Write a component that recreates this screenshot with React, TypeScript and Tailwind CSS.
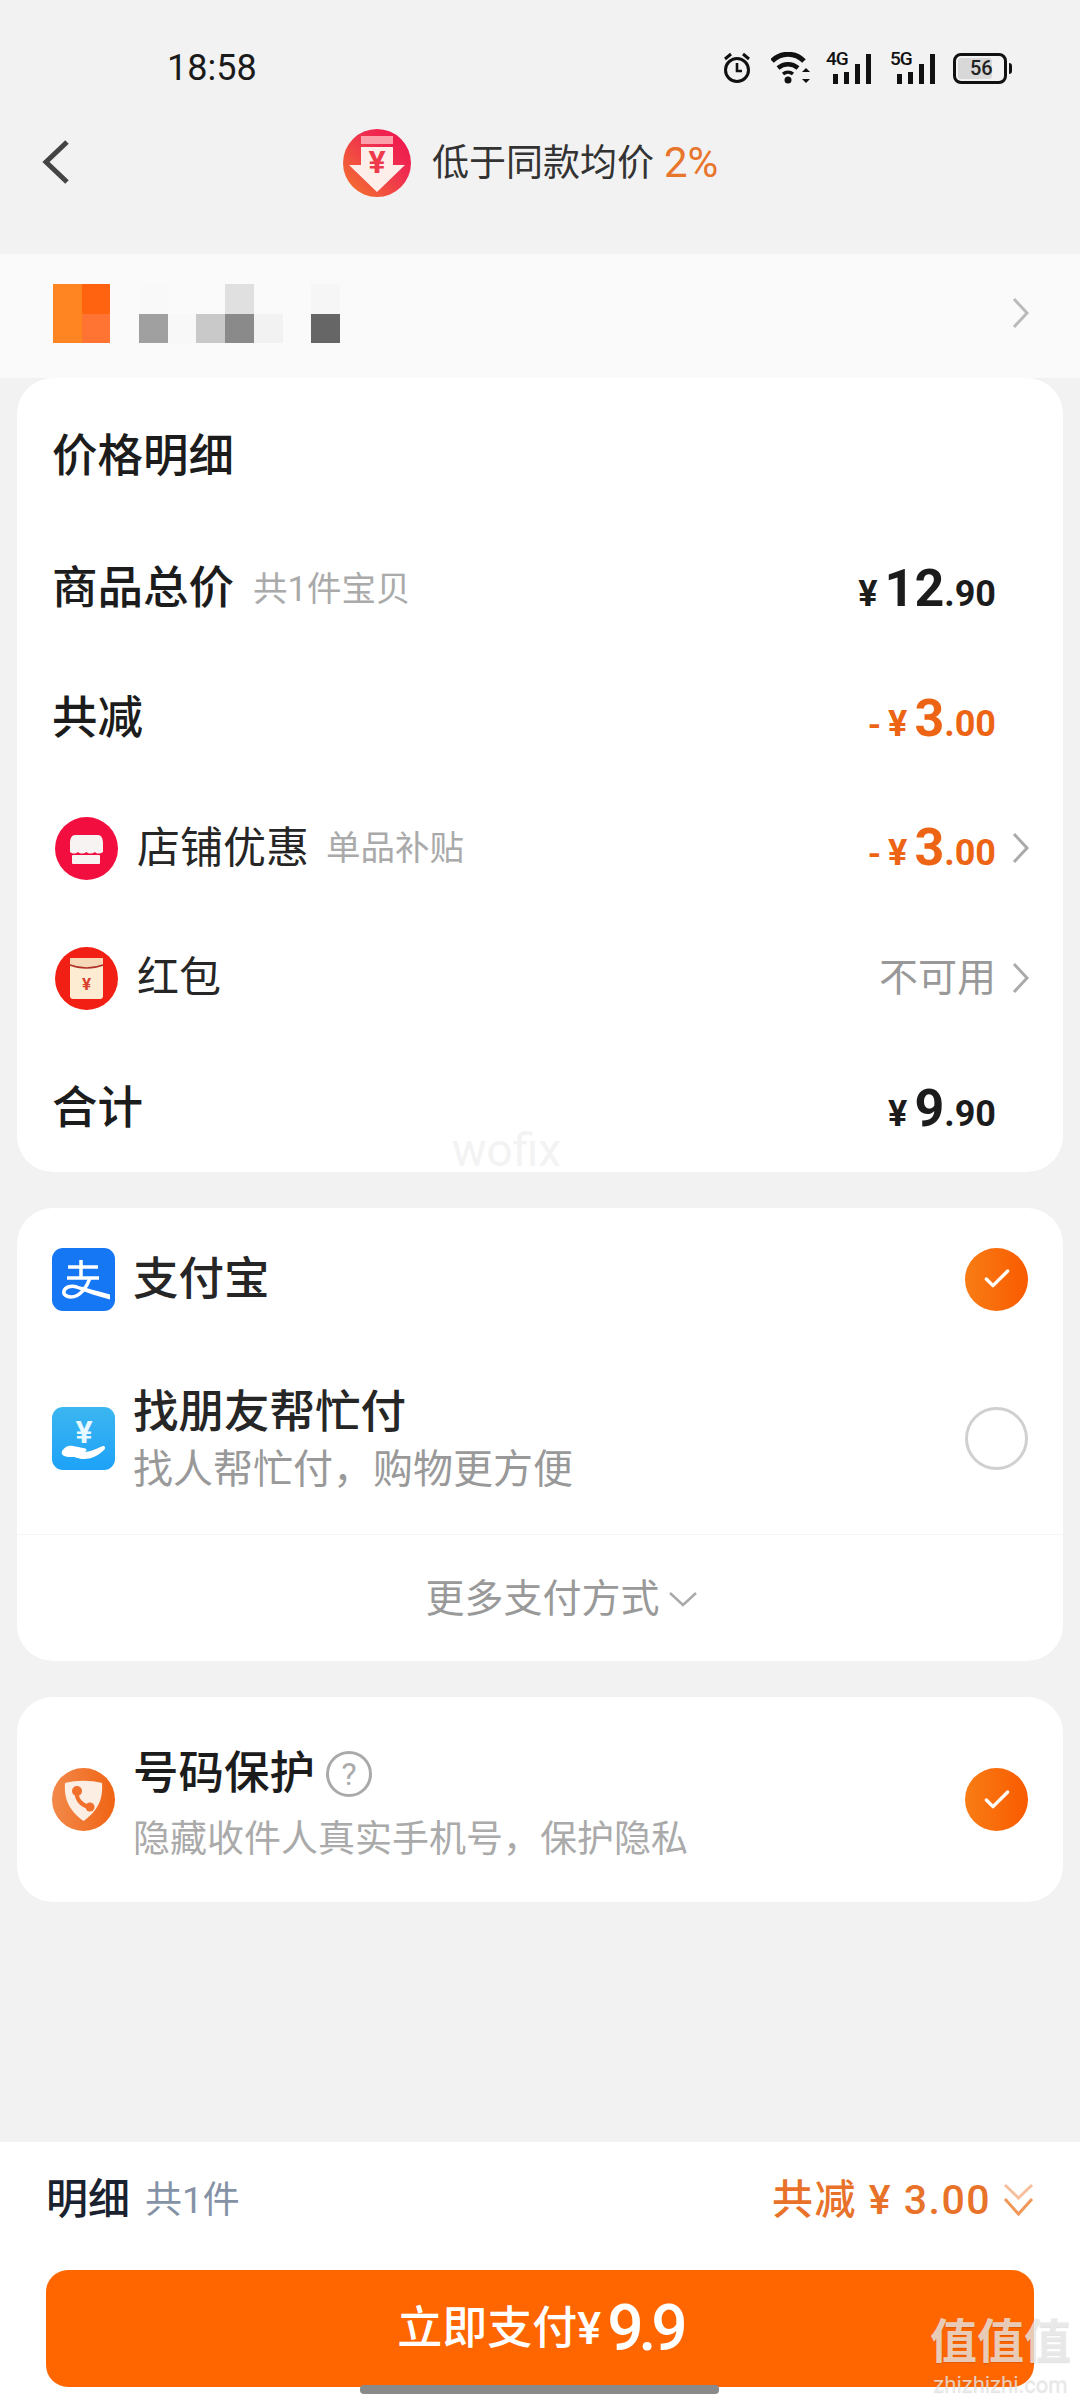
import { Check } from 'lucide-react';

const mosaicCells = [
  'bg-[#ff8522]', 'bg-[#ff630f]', '', 'bg-[#f9f9f9]', '', '', 'bg-[#e0e0e0]', '', '', 'bg-[#f6f6f6]',
  'bg-[#ff8522]', 'bg-[#ff7433]', '', 'bg-[#a0a0a0]', 'bg-[#f8f8f8]', 'bg-[#c9c9c9]', 'bg-[#8a8a8a]', 'bg-[#f2f2f2]', '', 'bg-[#666666]',
];

function Chevron({ className }: { className?: string }) {
  return (
    <svg width="18" height="32" viewBox="0 0 18 32" className={className}>
      <path d="M2 2l13 14L2 30" fill="none" stroke="currentColor" strokeWidth="3" />
    </svg>
  );
}

function StatusIcons() {
  return (
    <div className="flex items-center">
      <svg width="28" height="34" viewBox="0 0 28 34" className="mr-[20px]">
        <circle cx="14" cy="19" r="11.500" fill="none" stroke="#111" strokeWidth="3" />
        <path d="M14 12v8h5" fill="none" stroke="#111" strokeWidth="2.600" />
        <path d="M2 8l6-5M26 8l-6-5" stroke="#111" strokeWidth="3" />
      </svg>
      <svg width="39" height="32" viewBox="0 0 39 32" className="mr-[16px]">
        <path d="M1 9C10 0 24 0 33 9" fill="none" stroke="#111" strokeWidth="5" />
        <path d="M7 16c6-5 14-5 20 0" fill="none" stroke="#111" strokeWidth="4.500" />
        <path d="M12 22c3-2.500 7-2.500 10 0" fill="none" stroke="#111" strokeWidth="3.500" />
        <circle cx="17" cy="28" r="3.500" fill="#111" />
        <path d="M35 16l4 4h-8zM35 31l4-4h-8z" fill="#111" />
      </svg>
      <SignalBars label="4G" />
      <div className="w-[19px]" />
      <SignalBars label="5G" />
      <div className="w-[18px]" />
      <div className="flex h-[31px] w-[54px] items-center rounded-[8px] border-[3px] border-[#111] p-[2px]">
        <div className="flex h-full w-[34px] items-center rounded-[3px] bg-[#d8d8d8] pl-[12px] text-[20px] leading-none font-medium text-[#222]">
          56
        </div>
      </div>
      <div className="ml-[2px] h-[11px] w-[3px] rounded-r-sm bg-[#111]" />
    </div>
  );
}

function SignalBars({ label }: { label: string }) {
  return (
    <div className="relative flex h-[32px] w-[45px] items-end justify-end gap-[6px]">
      <span className="absolute top-[-3px] left-0 text-[19px] leading-none font-medium tracking-[-1px] text-[#111]">{label}</span>
      <div className="h-[10px] w-[5px] bg-[#111]" />
      <div className="h-[12px] w-[5px] bg-[#111]" />
      <div className="h-[20px] w-[5px] bg-[#111]" />
      <div className="h-[30px] w-[5px] bg-[#111]" />
    </div>
  );
}

function PriceDropIcon() {
  return (
    <svg width="68" height="68" viewBox="0 0 68 68">
      <defs>
        <linearGradient id="drop" x1="0" y1="1" x2="1" y2="0">
          <stop offset="0" stopColor="#f47a2a" />
          <stop offset="0.6" stopColor="#ef2f4f" />
          <stop offset="1" stopColor="#f0104f" />
        </linearGradient>
      </defs>
      <circle cx="34" cy="34" r="34" fill="url(#drop)" />
      <rect x="18" y="7" width="32" height="8" fill="#fba0ab" />
      <path d="M18 18h32v18h12L34 63 6 36h12z" fill="#fdeeea" />
      <text x="34" y="44" textAnchor="middle" fontSize="32" fontWeight="700" fill="#ee3a4a">¥</text>
    </svg>
  );
}

function ShopIcon() {
  return (
    <svg width="63" height="63" viewBox="0 0 63 63">
      <circle cx="31.500" cy="31.500" r="31.500" fill="#f20f3f" />
      <path d="M20 18h23c3 0 5 3 5 8v9c-3 2-6 2-8 0-3 2-6 2-8.500 0-3 2-6 2-8.500 0-3 2-5 2-8 0v-9c0-5 2-8 5-8z" fill="#f7f3f3" />
      <rect x="17" y="38" width="28" height="9" rx="1" fill="#f7f3f3" />
    </svg>
  );
}

function RedPacketIcon() {
  return (
    <svg width="63" height="63" viewBox="0 0 63 63">
      <circle cx="31.500" cy="31.500" r="31.500" fill="#f21f14" />
      <rect x="15" y="11" width="33" height="41" rx="3" fill="#fdebd2" />
      <path d="M15 11h33v7c-10 4-23 4-33 0z" fill="#f6d8b8" />
      <path d="M15 18c10 4 23 4 33 0" fill="none" stroke="#b03028" strokeWidth="1.500" />
      <text x="31.500" y="43" textAnchor="middle" fontSize="17" fontWeight="700" fill="#d8402c">¥</text>
    </svg>
  );
}

function AlipayIcon() {
  return (
    <svg width="63" height="63" viewBox="0 0 63 63">
      <rect width="63" height="63" rx="11" fill="#1677f5" />
      <path d="M16 19h30M29 12v17M15 30h32" stroke="#fff" strokeWidth="3.500" fill="none" />
      <path d="M38 30c-3 9-10 19-19 19-5 0-8-3-7-6 1-4 7-6 13-4" stroke="#fff" strokeWidth="3.500" fill="none" />
      <path d="M24 37.500c10 2 22 6 34 9v5c-12-3-23-7-34-11z" fill="#fff" />
    </svg>
  );
}

function FriendPayIcon() {
  return (
    <svg width="63" height="63" viewBox="0 0 63 63">
      <defs>
        <linearGradient id="friend" x1="0" y1="0" x2="0" y2="1">
          <stop offset="0" stopColor="#3cb6f0" />
          <stop offset="1" stopColor="#1da2f8" />
        </linearGradient>
      </defs>
      <rect width="63" height="63" rx="11" fill="url(#friend)" />
      <text x="32" y="36" textAnchor="middle" fontSize="32" fontWeight="700" fill="#e8f8ff">¥</text>
      <path d="M10 44c3-5 7-6 11-5l10 2c4 0 5 3 1 4 5 0 12-3 19-6 2 0 3 2 1 4-6 6-13 9-20 9-6 0-8-2-11-2-5 0-13 0-11-6z" fill="#fff" />
    </svg>
  );
}

function PhoneGuardIcon() {
  return (
    <svg width="63" height="63" viewBox="0 0 63 63">
      <defs>
        <linearGradient id="guard" x1="0" y1="0" x2="1" y2="0">
          <stop offset="0" stopColor="#f2894a" />
          <stop offset="1" stopColor="#f06414" />
        </linearGradient>
      </defs>
      <circle cx="31.500" cy="31.500" r="31.500" fill="url(#guard)" />
      <path d="M13 15c12-3 25-3 37 0 1 15-3 27-18.500 38C16 42 12 30 13 15z" fill="#fdeee4" />
      <path d="M25 24c-1 7 4 13 12 15" fill="none" stroke="#f0702c" strokeWidth="4" />
      <circle cx="25" cy="23" r="5" fill="#f0702c" />
      <circle cx="38" cy="39" r="4.500" fill="#f0702c" />
    </svg>
  );
}

function CheckDot() {
  return (
    <div className="flex h-[63px] w-[63px] items-center justify-center rounded-full bg-gradient-to-r from-[#f87c14] to-[#f95a00]">
      <Check className="h-[32px] w-[32px] text-white" strokeWidth={2.5} />
    </div>
  );
}

function Price({ big, tail, minus }: { big: string; tail: string; minus?: boolean }) {
  return (
    <span className={`flex items-baseline font-['Roboto',sans-serif] font-bold ${minus ? 'text-[#ec6414]' : 'text-[#1c1c1c]'}`}>
      {minus && <span className="mr-[7px] text-[34px] leading-none">-</span>}
      <span className="mr-[7px] text-[36px] leading-none">¥</span>
      <span className="text-[52px] leading-none">{big}</span>
      <span className="text-[36px] leading-none">{tail}</span>
    </span>
  );
}

export default function App() {
  return (
    <div className="relative flex h-[2400px] w-[1080px] flex-col overflow-hidden bg-[#f2f2f2] font-['Roboto','Noto_Sans_CJK_SC',sans-serif]">
      <div className="flex h-[106px] items-center justify-between pt-[30px] pr-[68px] pl-[167px]">
        <span className="text-[36px] leading-none text-[#1a1a1a]">18:58</span>
        <StatusIcons />
      </div>

      <div className="relative mb-[34px] flex h-[114px] items-center justify-start pl-[343px]">
        <svg width="30" height="46" viewBox="0 0 30 46" className="absolute top-[33px] left-[41px] text-[#444]">
          <path d="M26 3L5 23l21 20" fill="none" stroke="currentColor" strokeWidth="5" />
        </svg>
        <PriceDropIcon />
        <span className="ml-[21px] text-[37px] leading-none text-[#333]">低于同款均价</span>
        <span className="ml-[10px] text-[42px] leading-none text-[#e8752c]">2%</span>
      </div>

      <div className="flex h-[124px] items-center justify-between bg-[#fafafa] pr-[50px] pb-[6px] pl-[53px]">
        <div className="grid grid-cols-[repeat(10,28.7px)] grid-rows-[30px_29px]">
          {mosaicCells.map((cell, index) => (
            <div key={index} className={cell} />
          ))}
        </div>
        <Chevron className="text-[#bbb]" />
      </div>

      <section className="mx-[17px] rounded-[36px] bg-white pt-[14px] text-[#1c1c1c]">
        <div className="flex h-[130px] items-center pl-[35px] text-[45.5px] leading-none font-medium">价格明细</div>
        <div className="flex h-[130px] items-center justify-between pt-[4px] pr-[67px] pl-[35px]">
          <div className="flex items-center">
            <span className="text-[45.5px] leading-none font-medium">商品总价</span>
            <span className="ml-[19px] text-[34.5px] leading-none text-[#aaa]">共1件宝贝</span>
          </div>
          <Price big="12" tail=".90" />
        </div>
        <div className="flex h-[130px] items-center justify-between pt-[4px] pr-[67px] pl-[35px]">
          <span className="text-[45.5px] leading-none font-medium">共减</span>
          <Price big="3" tail=".00" minus />
        </div>
        <div className="flex h-[130px] items-center justify-between pt-[2px] pr-[33px] pl-[38px]">
          <div className="flex items-center">
            <ShopIcon />
            <span className="ml-[19px] text-[43px] leading-none text-[#262626]">店铺优惠</span>
            <span className="ml-[17px] text-[34.5px] leading-none text-[#aaa]">单品补贴</span>
          </div>
          <div className="flex items-center">
            <Price big="3" tail=".00" minus />
            <Chevron className="ml-[16px] text-[#aaa]" />
          </div>
        </div>
        <div className="flex h-[130px] items-center justify-between pt-[2px] pr-[33px] pl-[38px]">
          <div className="flex items-center">
            <RedPacketIcon />
            <span className="ml-[19px] text-[42px] leading-none text-[#262626]">红包</span>
          </div>
          <div className="flex items-center">
            <span className="text-[39px] leading-none text-[#999]">不可用</span>
            <Chevron className="ml-[16px] text-[#aaa]" />
          </div>
        </div>
        <div className="flex h-[130px] items-center justify-between pt-[4px] pr-[67px] pl-[35px]">
          <span className="text-[45.5px] leading-none font-medium">合计</span>
          <Price big="9" tail=".90" />
        </div>
      </section>

      <section className="mx-[17px] mt-[36px] rounded-[36px] bg-white">
        <div className="flex h-[142px] items-center justify-between px-[35px]">
          <div className="flex items-center">
            <AlipayIcon />
            <span className="ml-[18px] pt-[2px] text-[45.5px] leading-none font-medium text-[#262626]">支付宝</span>
          </div>
          <CheckDot />
        </div>
        <div className="flex h-[185px] items-center justify-between border-b border-[#f6f6f6] px-[35px] pb-[8px]">
          <div className="flex items-center">
            <FriendPayIcon />
            <div className="ml-[18px] flex flex-col gap-[15px] pt-[4px]">
              <span className="text-[45.5px] leading-none font-medium text-[#262626]">找朋友帮忙付</span>
              <span className="text-[40px] leading-none text-[#999]">找人帮忙付，购物更方便</span>
            </div>
          </div>
          <div className="h-[63px] w-[63px] rounded-full border-[3px] border-[#d0d0d0]" />
        </div>
        <div className="flex h-[126px] items-center justify-center pt-[2px] pl-[43px] text-[#999]">
          <span className="text-[39px] leading-none">更多支付方式</span>
          <svg width="30" height="16" viewBox="0 0 30 16" className="ml-[8px] text-[#aaa]">
            <path d="M2 2l13 12L28 2" fill="none" stroke="currentColor" strokeWidth="2.500" />
          </svg>
        </div>
      </section>

      <section className="mx-[17px] mt-[36px] flex h-[205px] items-center justify-between rounded-[36px] bg-white px-[35px]">
        <div className="flex items-center">
          <PhoneGuardIcon />
          <div className="ml-[18px] flex flex-col gap-[24px] pt-[9px]">
            <div className="flex items-center">
              <span className="text-[45.5px] leading-none font-medium text-[#1c1c1c]">号码保护</span>
              <div className="ml-[11px] flex h-[46px] w-[46px] items-center justify-center rounded-full border-[3px] border-[#aaa] text-[32px] leading-none text-[#aaa]">
                ?
              </div>
            </div>
            <span className="text-[37px] leading-none text-[#aaa]">隐藏收件人真实手机号，保护隐私</span>
          </div>
        </div>
        <CheckDot />
      </section>

      <div className="flex-1" />

      <div className="flex h-[258px] flex-col bg-white px-[46px]">
        <div className="flex h-[116px] items-center justify-between">
          <div className="flex items-center">
            <span className="text-[42px] leading-none font-medium text-[#1a2230]">明细</span>
            <span className="ml-[15px] text-[37px] leading-none text-[#8592a6]">共1件</span>
          </div>
          <div className="flex items-center text-[#e8722a]">
            <span className="text-[41px] leading-none font-medium tracking-[1.500px]">共减 ¥ 3.00</span>
            <svg width="31" height="34" viewBox="0 0 31 34" className="ml-[12px]">
              <path d="M2 2l13.500 13L29 2" fill="none" stroke="#f6c09c" strokeWidth="3" />
              <path d="M2 16l13.500 15L29 16" fill="none" stroke="#f09858" strokeWidth="3" />
            </svg>
          </div>
        </div>
        <button className="mt-[12px] flex h-[117px] items-center justify-center rounded-[22px] bg-[#ff6600] text-white">
          <span className="text-[45px] leading-none font-medium">立即支付¥</span>
          <span className="ml-[6px] text-[64px] leading-none font-medium tracking-[-5px]">9.9</span>
        </button>
      </div>

      <div className="absolute top-[2385px] left-[360px] h-[9px] w-[359px] rounded-sm bg-[#8a8a8a]" />
      <span className="absolute top-[1127px] left-[452px] text-[46px] leading-none text-[#f3f3f3]">wofix</span>
      <div className="absolute top-[2318px] left-[930px] flex w-[141px] flex-col items-center font-bold text-[#ebebeb]/80 [text-shadow:0_1px_1px_rgba(0,0,0,0.12)]">
        <span className="text-[47px] leading-none">值值值</span>
        <span className="mt-[9px] text-[22px] leading-none font-normal">zhizhizhi.com</span>
      </div>
    </div>
  );
}
